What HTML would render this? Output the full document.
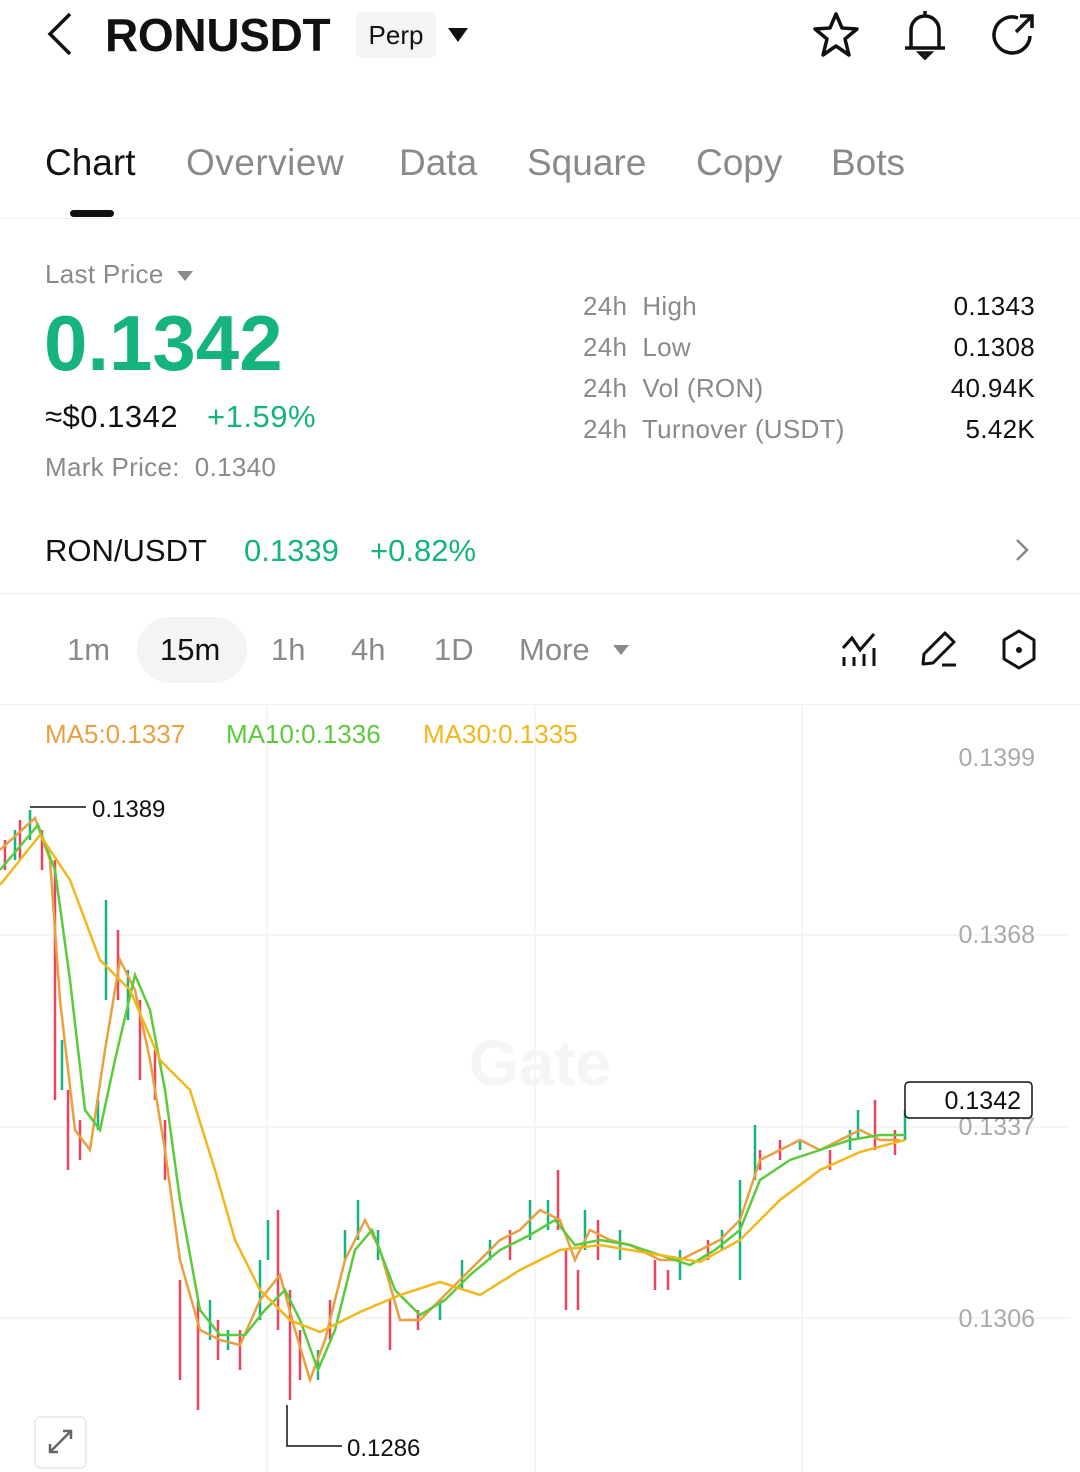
<!DOCTYPE html>
<html><head><meta charset="utf-8"><style>
*{margin:0;padding:0;box-sizing:border-box}
body{width:1080px;height:1472px;overflow:hidden;background:#fff;font-family:"Liberation Sans",sans-serif;position:relative;color:#111}
.a{position:absolute;white-space:nowrap}
.g{color:#8a8a8a}
.grn{color:#15b37d}
</style></head><body>
<svg class="a" style="left:44px;top:12px" width="32" height="44" viewBox="0 0 32 44"><path d="M26 2 L6 22 L26 42" fill="none" stroke="#111" stroke-width="3.5"/></svg>
<div class="a" style="left:105px;top:8px;font-size:46px;font-weight:bold;letter-spacing:-0.3px">RONUSDT</div>
<div class="a" style="left:356px;top:12px;width:80px;height:46px;background:#f4f4f4;border-radius:6px;font-size:26px;line-height:46px;text-align:center">Perp</div>
<div class="a" style="left:448px;top:28px;width:0;height:0;border-left:10px solid transparent;border-right:10px solid transparent;border-top:14px solid #111"></div>
<svg class="a" style="left:810px;top:10px" width="52" height="50" viewBox="0 0 52 50"><path d="M26 4 L32 18 L47 19 L35 29 L39 45 L26 36 L13 45 L17 29 L5 19 L20 18 Z" fill="none" stroke="#111" stroke-width="3.5" stroke-linejoin="round"/></svg>
<svg class="a" style="left:900px;top:8px" width="50" height="52" viewBox="0 0 50 52"><path d="M25 3 V7 M11 40 V22 A14 14 0 0 1 39 22 V40 M5 40 H45 M20 45 L25 50 L30 45 Z" fill="none" stroke="#111" stroke-width="3.5"/></svg>
<svg class="a" style="left:988px;top:12px" width="50" height="48" viewBox="0 0 50 48"><path d="M30 6 A18 18 0 1 0 42 24" fill="none" stroke="#111" stroke-width="3.5"/><path d="M28 20 L43 5 M32 4 H44 V16" fill="none" stroke="#111" stroke-width="3.5"/></svg>

<div class="a" style="left:45px;top:142px;font-size:37px">Chart</div>
<div class="a g" style="left:186px;top:142px;font-size:37px;letter-spacing:0.5px">Overview</div>
<div class="a g" style="left:399px;top:142px;font-size:37px">Data</div>
<div class="a g" style="left:527px;top:142px;font-size:37px">Square</div>
<div class="a g" style="left:696px;top:142px;font-size:37px">Copy</div>
<div class="a g" style="left:831px;top:142px;font-size:37px">Bots</div>
<div class="a" style="left:70px;top:210px;width:44px;height:7px;background:#111;border-radius:4px"></div>
<div class="a" style="left:0;top:218px;width:1080px;height:1px;background:#eee"></div>

<div class="a g" style="left:45px;top:259px;font-size:26px;letter-spacing:0.3px">Last Price</div>
<div class="a" style="left:177px;top:271px;border-left:8px solid transparent;border-right:8px solid transparent;border-top:10px solid #8a8a8a"></div>
<div class="a grn" style="left:44px;top:298px;font-size:78px;font-weight:bold;letter-spacing:0px">0.1342</div>
<div class="a" style="left:45px;top:399px;font-size:31px;letter-spacing:0.5px">≈$0.1342</div>
<div class="a grn" style="left:207px;top:399px;font-size:31px;letter-spacing:0.5px">+1.59%</div>
<div class="a g" style="left:45px;top:452px;font-size:26px;letter-spacing:0.3px">Mark Price:&nbsp; 0.1340</div>
<div class="a g" style="left:583px;top:286px;font-size:26px;line-height:41px;letter-spacing:0.3px">24h&nbsp; High<br>24h&nbsp; Low<br>24h&nbsp; Vol (RON)<br>24h&nbsp; Turnover (USDT)</div>
<div class="a" style="right:45px;top:286px;font-size:26px;line-height:41px;text-align:right;letter-spacing:0.3px">0.1343<br>0.1308<br>40.94K<br>5.42K</div>

<div class="a" style="left:45px;top:533px;font-size:31px">RON/USDT</div>
<div class="a grn" style="left:244px;top:533px;font-size:31px">0.1339</div>
<div class="a grn" style="left:370px;top:533px;font-size:31px">+0.82%</div>
<svg class="a" style="left:1014px;top:537px" width="16" height="26"><path d="M3 3 L13 13 L3 23" fill="none" stroke="#888" stroke-width="2.5"/></svg>
<div class="a" style="left:0;top:593px;width:1080px;height:1px;background:#eee"></div>

<div class="a" style="left:137px;top:617px;width:110px;height:66px;background:#f4f4f4;border-radius:33px"></div>
<div class="a g" style="left:67px;top:632px;font-size:31px">1m</div>
<div class="a" style="left:160px;top:632px;font-size:31px">15m</div>
<div class="a g" style="left:271px;top:632px;font-size:31px">1h</div>
<div class="a g" style="left:351px;top:632px;font-size:31px">4h</div>
<div class="a g" style="left:434px;top:632px;font-size:31px">1D</div>
<div class="a g" style="left:519px;top:632px;font-size:31px">More</div>
<div class="a" style="left:613px;top:645px;border-left:8px solid transparent;border-right:8px solid transparent;border-top:10px solid #8a8a8a"></div>
<svg class="a" style="left:840px;top:630px" width="40" height="40"><path d="M3 18 L12 8 L20 20 L34 4 M4 27 V36 M14 27 V36 M24 24 V36 M34 18 V36" fill="none" stroke="#111" stroke-width="3"/></svg>
<svg class="a" style="left:918px;top:628px" width="42" height="42"><path d="M5 36 L6 26 L27 5 L36 14 L15 35 Z" fill="none" stroke="#111" stroke-width="3" stroke-linejoin="round"/><path d="M24 37 H38" stroke="#111" stroke-width="3"/></svg>
<svg class="a" style="left:1000px;top:628px" width="38" height="44"><path d="M19 3 L34 12 V31 L19 40 L4 31 V12 Z" fill="none" stroke="#111" stroke-width="3" stroke-linejoin="round"/><circle cx="19" cy="22" r="3" fill="#111"/></svg>
<div class="a" style="left:0;top:704px;width:1080px;height:1px;background:#f0f0f0"></div>

<svg class="a" style="left:0;top:705px" width="1080" height="767" viewBox="0 705 1080 767">
<g stroke="#f2f2f2" stroke-width="1.5"><path d="M267 705V1472M535 705V1472M802 705V1472M0 935H1070M0 1127H1070M0 1318H1070"/></g>
<text x="540" y="1085" font-family="Liberation Sans" font-size="64" font-weight="bold" fill="#f5f5f5" text-anchor="middle">Gate</text>
<g stroke-width="2.5">
<path stroke="#e9445e" d="M5 840V870M20 820V860M42 830V870M55 860V1100M68 1090V1170M80 1120V1160M118 930V1000M140 1000V1080M155 1050V1100M165 1120V1180M180 1280V1380M198 1300V1410M218 1320V1360M240 1330V1370M278 1210V1330M290 1290V1400M300 1330V1380M330 1300V1340M390 1300V1350M418 1310V1330M510 1230V1260M558 1170V1230M566 1250V1310M578 1270V1310M598 1220V1260M655 1260V1290M668 1270V1290M708 1240V1260M760 1150V1170M780 1140V1160M830 1150V1170M875 1100V1150M895 1130V1155"/>
<path stroke="#15b37d" d="M15 830V860M30 810V840M62 1040V1090M98 1100V1130M106 900V1000M128 970V1020M210 1300V1340M228 1330V1350M260 1260V1320M268 1220V1260M318 1350V1380M345 1230V1260M358 1200V1240M378 1230V1260M440 1300V1320M462 1260V1290M490 1240V1260M530 1200V1240M548 1200V1230M585 1210V1250M620 1230V1260M680 1250V1280M722 1230V1250M740 1180V1280M755 1125V1180M800 1140V1150M850 1130V1150M858 1110V1140M905 1110V1140"/>
</g>
<g fill="none" stroke-width="2.5">
<polyline stroke="#e8a040" points="0,850 35,818 50,860 60,1000 75,1130 90,1150 105,1050 120,960 135,990 150,1060 165,1150 180,1260 200,1330 220,1340 240,1345 260,1300 280,1275 295,1330 310,1380 325,1340 345,1260 365,1220 380,1250 400,1320 420,1320 440,1300 460,1280 480,1260 500,1240 520,1230 540,1210 560,1220 575,1260 590,1230 610,1240 630,1245 660,1260 680,1260 700,1250 720,1240 740,1220 760,1160 780,1150 800,1140 820,1150 840,1140 860,1130 880,1140 900,1140"/>
<polyline stroke="#5bcb3c" points="0,870 38,825 55,870 70,980 85,1110 100,1130 115,1060 135,975 150,1010 165,1090 180,1200 200,1310 220,1335 245,1335 265,1310 285,1290 300,1320 318,1370 335,1330 355,1250 372,1230 395,1290 420,1315 445,1300 470,1275 500,1250 530,1235 555,1220 575,1245 600,1240 630,1245 660,1255 690,1265 715,1250 740,1230 760,1180 790,1160 820,1150 850,1140 880,1135 905,1135"/>
<polyline stroke="#f0b81c" points="0,885 40,835 70,880 100,960 130,990 160,1060 190,1090 215,1170 235,1240 260,1290 290,1320 320,1332 360,1312 400,1295 440,1282 480,1295 520,1270 560,1250 600,1245 660,1255 700,1262 740,1240 780,1200 820,1170 860,1152 905,1140"/>
</g>
<path d="M30 807 H86 M287 1405 V1446 H342" stroke="#111" stroke-width="1.5" fill="none"/>
<text x="92" y="817" font-family="Liberation Sans" font-size="24" fill="#111">0.1389</text>
<text x="347" y="1456" font-family="Liberation Sans" font-size="24" fill="#111">0.1286</text>
<g font-family="Liberation Sans" font-size="25" fill="#aaa" text-anchor="end"><text x="1035" y="766">0.1399</text><text x="1035" y="943">0.1368</text><text x="1035" y="1135">0.1337</text><text x="1035" y="1327">0.1306</text></g>
<rect x="905" y="1082" width="127" height="36" rx="4" fill="#fff" stroke="#111" stroke-width="1.5"/>
<text x="1021" y="1109" font-family="Liberation Sans" font-size="25" fill="#111" text-anchor="end">0.1342</text>
<rect x="35" y="1417" width="51" height="51" rx="6" fill="#fff" stroke="#e6e6e6" stroke-width="1.5"/>
<path d="M50 1452 L71 1431 M63 1431 H71 V1439 M50 1444 V1452 H58" stroke="#666" stroke-width="2.5" fill="none"/>
</svg>
<div class="a" style="left:45px;top:719px;font-size:26px;color:#e8a040">MA5:0.1337</div>
<div class="a" style="left:226px;top:719px;font-size:26px;color:#5bcb3c">MA10:0.1336</div>
<div class="a" style="left:423px;top:719px;font-size:26px;color:#f0b81c">MA30:0.1335</div>
</body></html>
